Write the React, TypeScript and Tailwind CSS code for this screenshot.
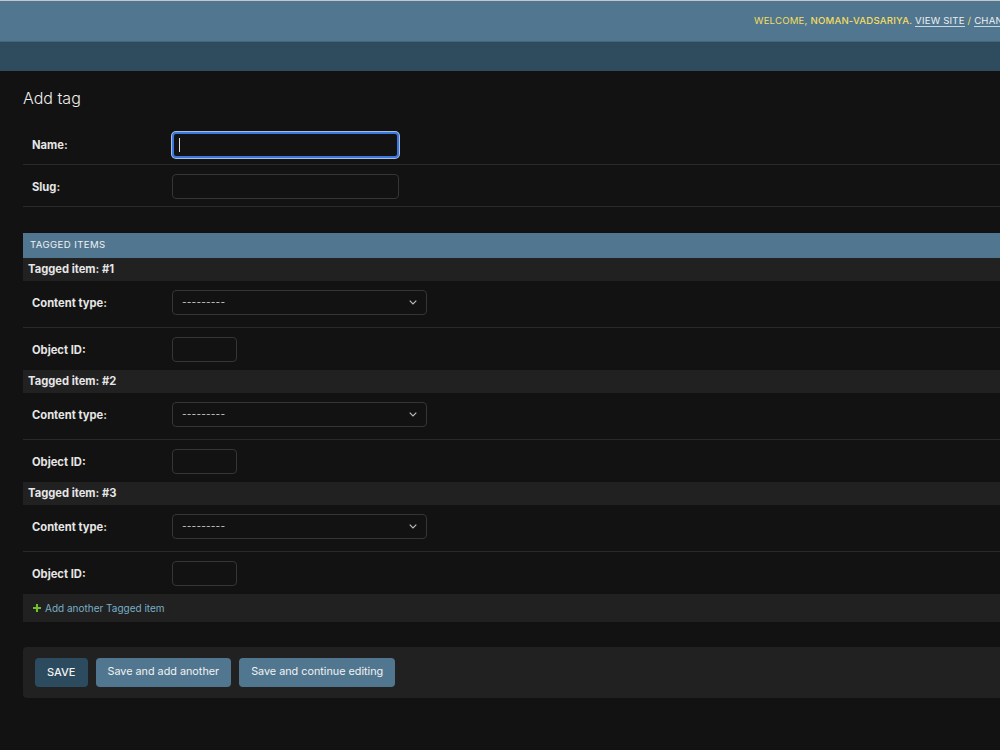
import React from 'react';

const items = [1, 2, 3];

function Row({ label, children }: { label: string; children: React.ReactNode }) {
  return (
    <div className="flex h-[42px] items-start border-b border-[#2a2a2a] pl-[9px] pt-[9px]">
      <label className="w-[140px] pt-[5px] text-[11.2px] font-bold text-[#e6e6e6]">{label}</label>
      {children}
    </div>
  );
}

function Select() {
  return (
    <div className="flex h-[25px] w-[255px] items-center justify-between rounded-[4px] border border-[#353535] bg-[#121212] pl-[9px] pr-[9px]">
      <span className="text-[10px] tracking-[0.2px] text-[#cfcfcf]">---------</span>
      <svg width="8" height="5" viewBox="0 0 8 5" fill="none">
        <path d="M0.7 0.7l3.3 3.3 3.3-3.3" stroke="#bbbbbb" strokeWidth="1.2" />
      </svg>
    </div>
  );
}

export default function App() {
  return (
    <div className="min-h-[750px] w-[1000px] overflow-hidden bg-[#121212] font-['Inter',sans-serif]">
      <div className="w-[1300px]">
        <div className="flex h-[41px] items-center border-t border-[#c6c6c6] bg-[#517790] pl-[754px] text-[9.6px] uppercase tracking-[0.2px] text-[#f5dd5d] whitespace-nowrap">
          <span>
            Welcome, <strong className="font-medium">noman-vadsariya</strong>.{' '}
            <span className="border-b border-[#c8d6e0] text-[#eeeeee]">View site</span> /{' '}
            <span className="border-b border-[#c8d6e0] text-[#eeeeee]">Change password</span> /{' '}
            <span className="border-b border-[#c8d6e0] text-[#eeeeee]">Log out</span>
          </span>
        </div>
        <div className="h-[30px] border-t border-[#45657a] bg-[#2f4b5e]" />

        <div className="pl-[23px] pt-[15px]">
          <h1 className="mb-[13px] text-[16px] leading-[24px] font-light text-[#eeeeee]">Add tag</h1>

          <div>
            <Row label="Name:">
              <div className="flex h-[26px] w-[227px] items-center rounded-[4px] border-2 border-[#3a78e0] bg-[#121212] pl-[5px] ring-1 ring-[#a9bede]">
                <span className="h-[14px] w-px bg-[#dddddd]" />
              </div>
            </Row>
            <Row label="Slug:">
              <div className="h-[25px] w-[227px] rounded-[4px] border border-[#353535] bg-[#121212]" />
            </Row>
          </div>

          <div className="mt-[26px]">
            <div className="flex h-[25px] items-center bg-[#517790] pl-[7px] text-[9.6px] uppercase tracking-[0.4px] text-[#f0f0f0]">
              Tagged items
            </div>
            {items.map((n) => (
              <div key={n}>
                <div className="flex h-[23px] items-center bg-[#212121] pl-[5px] text-[11.2px] font-bold text-[#e6e6e6]">
                  Tagged item: #{n}
                </div>
                <div className="flex h-[47px] items-start border-b border-[#2a2a2a] pl-[9px] pt-[9px]">
                  <label className="w-[140px] pt-[5px] text-[11.2px] font-bold text-[#e6e6e6]">Content type:</label>
                  <Select />
                </div>
                <div className="flex h-[42px] items-start pl-[9px] pt-[9px]">
                  <label className="w-[140px] pt-[5px] text-[11.2px] font-bold text-[#e6e6e6]">Object ID:</label>
                  <div className="h-[25px] w-[65px] rounded-[4px] border border-[#353535] bg-[#121212]" />
                </div>
              </div>
            ))}
            <div className="flex h-[28px] items-center gap-[4px] bg-[#212121] pl-[10px] text-[10px] text-[#79aec8]">
              <svg width="8" height="8" viewBox="0 0 9 9">
                <path d="M3.3 0h2.4v3.3H9v2.4H5.7V9H3.3V5.7H0V3.3h3.3z" fill="#70bf2b" />
              </svg>
              Add another Tagged item
            </div>
          </div>

          <div className="mt-[25px] flex h-[51px] items-center gap-[8px] rounded-[4px] bg-[#212121] pl-[12px]">
            <button className="h-[29px] rounded-[4px] bg-[#2d4b5f] px-[12px] text-[11px] font-medium uppercase text-[#f2f2f2]">
              Save
            </button>
            <button className="h-[29px] rounded-[4px] bg-[#517790] px-[12px] text-[10.8px] text-[#f2f2f2]">
              Save and add another
            </button>
            <button className="h-[29px] rounded-[4px] bg-[#517790] px-[12px] text-[10.8px] text-[#f2f2f2]">
              Save and continue editing
            </button>
          </div>
        </div>
      </div>
    </div>
  );
}
